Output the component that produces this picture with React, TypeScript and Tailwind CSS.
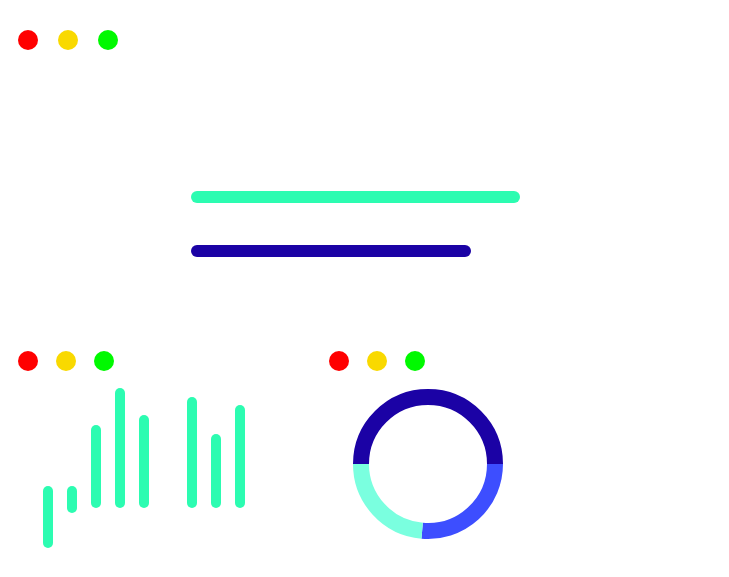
import React from "react";

const Dots = ({ gap }: { gap: string }) => (
  <div className={`flex ${gap}`}>
    <div className="w-[20px] h-[20px] rounded-full bg-[#ff0000]" />
    <div className="w-[20px] h-[20px] rounded-full bg-[#f9d900]" />
    <div className="w-[20px] h-[20px] rounded-full bg-[#00f900]" />
  </div>
);

const bars = [
  { x: 43, y: 106, h: 62 },
  { x: 67, y: 106, h: 27 },
  { x: 91, y: 45, h: 83 },
  { x: 115, y: 8, h: 120 },
  { x: 139, y: 35, h: 93 },
  { x: 187, y: 17, h: 111 },
  { x: 211, y: 54, h: 74 },
  { x: 235, y: 25, h: 103 },
];

export default function App() {
  return (
    <div className="w-[729px] h-[577px] bg-white overflow-hidden">
      <div className="pt-[30px] pl-[18px]">
        <div className="flex gap-[20px]">
          <div className="w-[20px] h-[20px] rounded-full bg-[#ff0000]" />
          <div className="w-[20px] h-[20px] rounded-full bg-[#f9d900]" />
          <div className="w-[20px] h-[20px] rounded-full bg-[#00f900]" />
        </div>
      </div>
      <div className="ml-[191px] mt-[141px] w-[329px] h-[12px] rounded-full bg-[#2cfcb1]" />
      <div className="ml-[191px] mt-[42px] w-[280px] h-[12px] rounded-full bg-[#1b02a5]" />
      <div className="flex mt-[94px]">
        <div className="w-[329px] flex flex-col">
          <div className="pl-[18px]">
            <Dots gap="gap-[18px]" />
          </div>
          <svg width="260" height="180" className="mt-[9px] block">
            {bars.map((b, i) => (
              <rect key={i} x={b.x} y={b.y} width={10} height={b.h} rx={5} fill="#2cfcb1" />
            ))}
          </svg>
        </div>
        <div className="flex flex-col">
          <Dots gap="gap-[18px]" />
          <svg width="200" height="180" className="mt-[9px] block">
            <path d="M32 84 A67 67 0 0 1 166 84" fill="none" stroke="#1b02a5" strokeWidth={16} />
            <path d="M166 84 A67 67 0 0 1 93.16 150.75" fill="none" stroke="#3d4eff" strokeWidth={16} />
            <path d="M93.16 150.75 A67 67 0 0 1 32 84" fill="none" stroke="#7affdf" strokeWidth={16} />
          </svg>
        </div>
      </div>
    </div>
  );
}
